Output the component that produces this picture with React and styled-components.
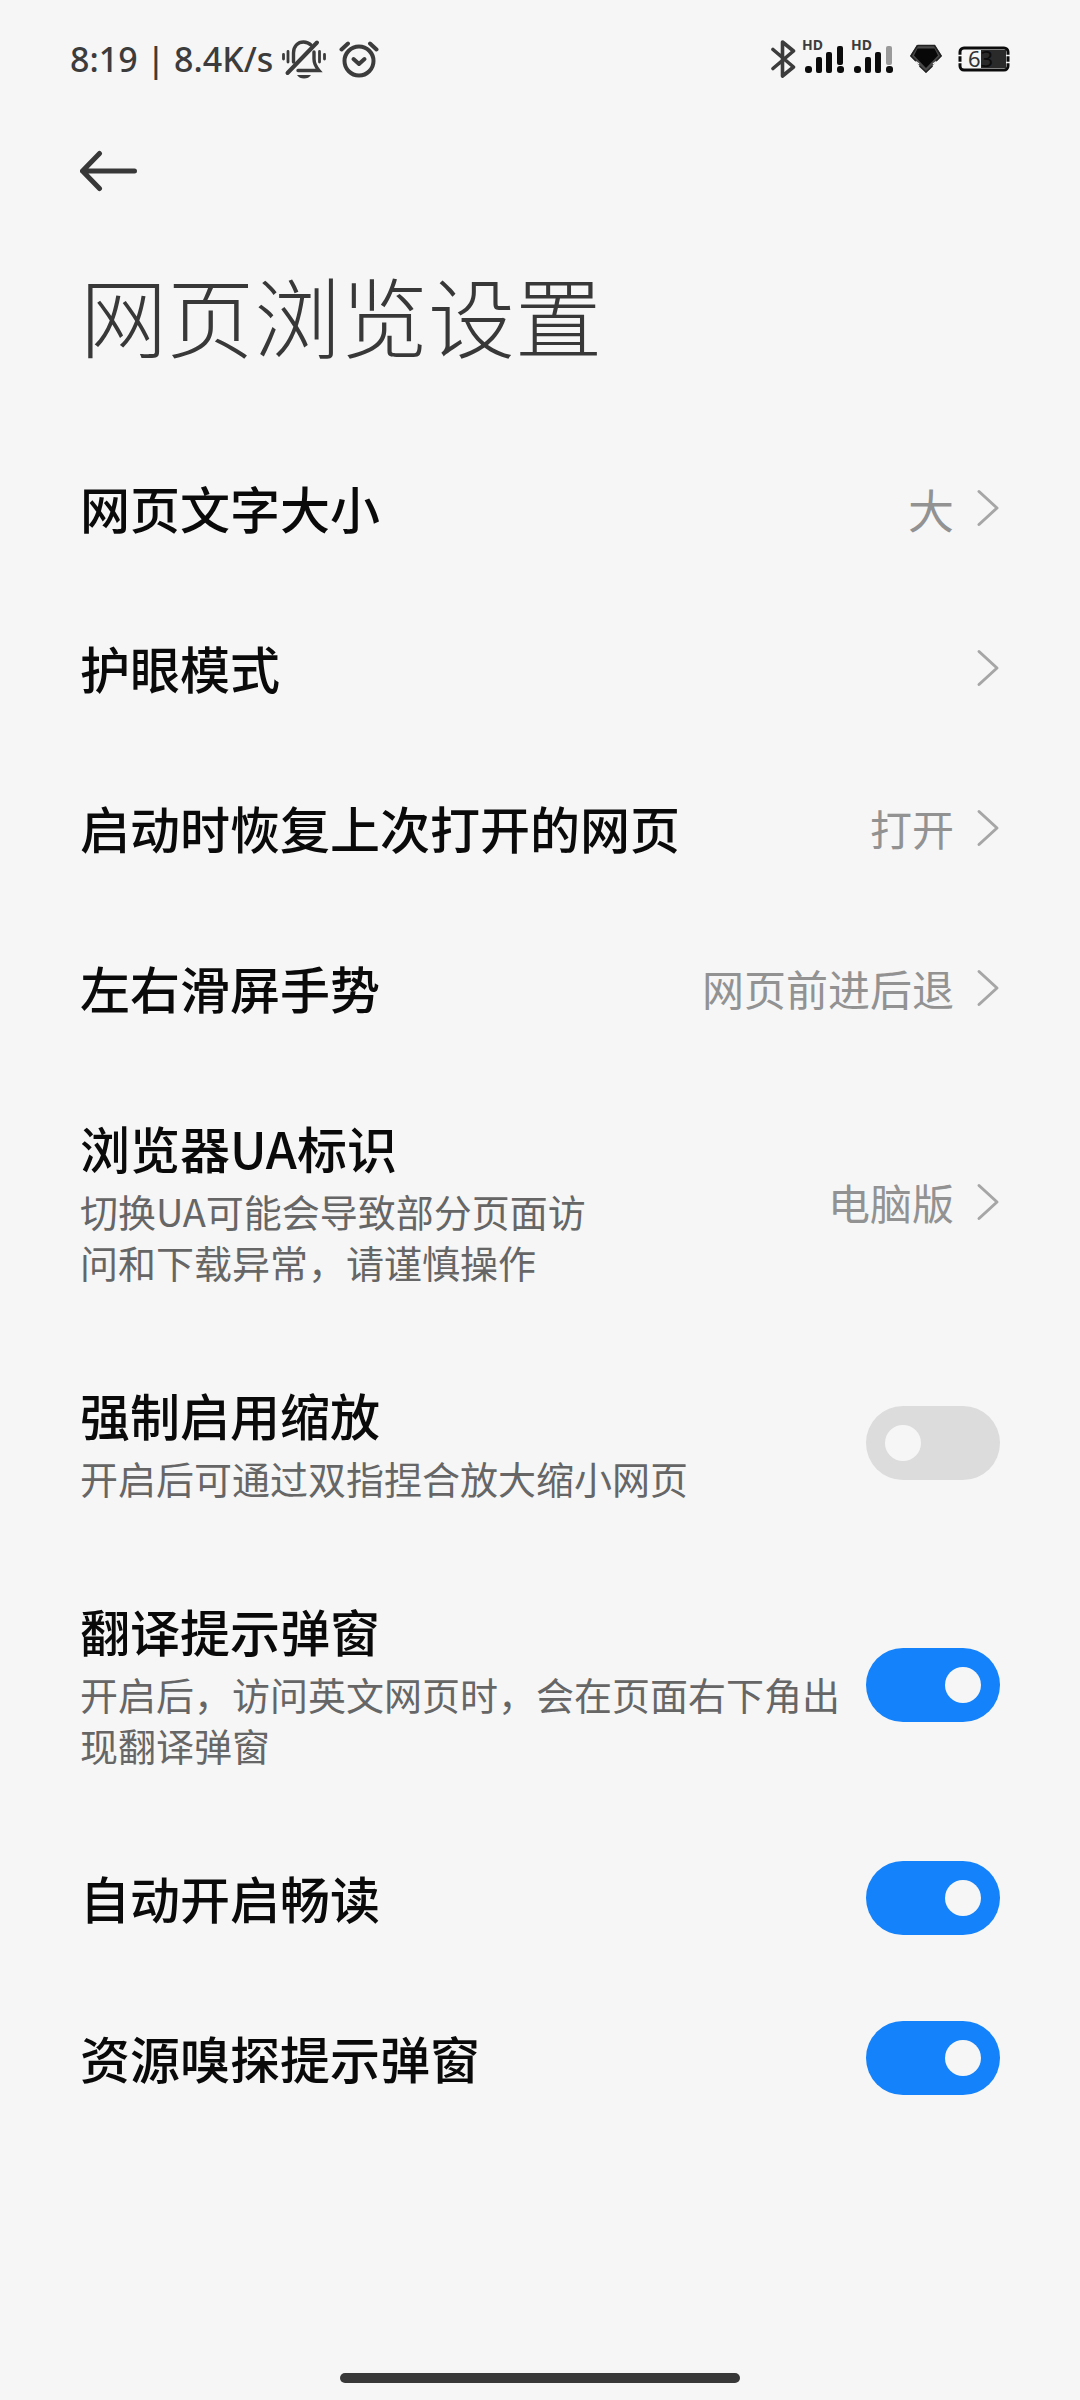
import React, { useState } from "react";
import styled, { createGlobalStyle } from "styled-components";

// Styles
const GlobalStyle = createGlobalStyle`
  * {
    box-sizing: border-box;
  }

  body {
    margin: 0;
    background: #f6f6f6;
    color: #0a0a0a;
    font-family: "Noto Sans CJK SC", sans-serif;
  }

  button {
    border: 0;
    padding: 0;
    background: none;
    color: inherit;
    font: inherit;
    text-align: left;
    cursor: pointer;
  }

  svg {
    display: block;
    flex: none;
  }
`;

const Screen = styled.div`
  display: flex;
  flex-direction: column;
  min-height: 100vh;
`;

const StatusBar = styled.div`
  display: flex;
  align-items: center;
  justify-content: space-between;
  height: 118px;
  padding: 0 70px;
  color: #3c3c3c;
`;

const StatusGroup = styled.div`
  display: flex;
  align-items: center;
  gap: ${({ $gap }) => $gap}px;
`;

const StatusText = styled.span`
  font-family: "Noto Sans", sans-serif;
  font-size: 34px;
  font-weight: 500;
  line-height: 40px;
  white-space: nowrap;
`;

const Header = styled.header`
  padding: 32px 80px 0;
  color: #383838;
`;

const BackButton = styled.button`
  display: block;
`;

const PageTitle = styled.h1`
  margin: 58px 0 0;
  font-size: 87px;
  font-weight: 300;
  line-height: 128px;
`;

const List = styled.main`
  display: flex;
  flex: 1;
  flex-direction: column;
  padding: 50px 80px;
`;

const rowStyles = `
  display: flex;
  align-items: center;
  justify-content: space-between;
  gap: 24px;
  width: 100%;
  padding: 40px 0;
  cursor: pointer;
`;

const LinkRow = styled.button`
  && {
    ${rowStyles}
  }
`;

const SwitchRow = styled.label`
  ${rowStyles}
`;

const RowText = styled.span`
  display: flex;
  flex-direction: column;
  gap: 5px;
  padding: 6px 0 8px;
`;

const RowTitle = styled.span`
  font-size: 50px;
  font-weight: 500;
  line-height: 66px;
`;

const RowNote = styled.span`
  max-width: ${({ $narrow }) => ($narrow ? "520px" : "none")};
  color: #666;
  font-size: 38px;
  line-height: 51px;
`;

const RowValue = styled.span`
  display: flex;
  align-items: center;
  gap: 22px;
  color: #929292;
  font-size: ${({ $large }) => ($large ? 46 : 42)}px;
  line-height: 60px;
  white-space: nowrap;
`;

const Switch = styled.input`
  display: flex;
  flex: none;
  align-items: center;
  justify-content: ${({ checked }) => (checked ? "flex-end" : "flex-start")};
  width: 134px;
  height: 74px;
  margin: 0;
  padding: 0 19px;
  border-radius: 37px;
  appearance: none;
  background: ${({ checked }) => (checked ? "#1482fa" : "#dcdcdc")};
  cursor: pointer;

  &::before {
    content: "";
    width: 36px;
    height: 36px;
    border-radius: 50%;
    background: #f6f6f6;
  }
`;

const HomeBar = styled.div`
  width: 37%;
  height: 10px;
  margin: 0 auto 17px;
  border-radius: 5px;
  background: #383838;
`;

// Icons
const MutedBellIcon = () => (
  <svg width="50" height="40" viewBox="0 0 50 40" fill="none" stroke="currentColor" strokeWidth="3.4" strokeLinecap="round">
    <path d="M12.5 23V14C12.5 7 17 3 22.5 3C25.5 3 28 4 30 6" />
    <path d="M6.5 34L36 3.5" strokeWidth="4" />
    <path d="M33 13V20C33 25 35 28 38 31.5H17" />
    <path d="M16 36H30C28.5 38.5 26 39.5 23 39.5S17.5 38.5 16 36Z" fill="currentColor" stroke="none" />
    <path d="M2.5 15.5V20M7 12.5V23M38.5 12.5V23M43.5 15.5V20" strokeWidth="2.8" />
  </svg>
);

const AlarmIcon = () => (
  <svg width="40" height="38" viewBox="0 0 40 38" fill="none" stroke="currentColor" strokeWidth="4" strokeLinecap="round">
    <circle cx="20" cy="21" r="14.5" />
    <path d="M14.5 19L20 24L25.5 19" strokeLinejoin="round" />
    <path d="M2.5 9.5L9 3.5M31 3.5L37.5 9.5" />
  </svg>
);

const BluetoothIcon = () => (
  <svg width="26" height="40" viewBox="0 0 26 40" fill="none" stroke="currentColor" strokeWidth="3.6" strokeLinejoin="round" strokeLinecap="round">
    <path d="M3 10.5L23.5 28L12.5 37V3L23.5 12L3 29.5" />
  </svg>
);

const SignalIcon = ({ weak }) => (
  <svg width="44" height="56" viewBox="0 -8 44 56" fill="#0c0c0c">
    <text x="1" y="11" fontFamily="Noto Sans" fontSize="14" fontWeight="700" fill="#3c3c3c">HD</text>
    <rect x="4" y="27" width="7" height="7" rx="3" />
    <rect x="15" y="18" width="6" height="16" rx="2" />
    <rect x="25" y="13" width="6" height="21" rx="2" />
    <rect x="36" y="7" width="6" height="19" rx="2" fill={weak ? "#9a9a9a" : "#0c0c0c"} />
    <rect x="36" y="27" width="7" height="7" rx="3" />
  </svg>
);

const GemIcon = () => (
  <svg width="34" height="30" viewBox="0 0 34 30">
    <path d="M8 1H26L33 12L27.5 17.5L17 29L6.5 17.5L1 12Z" fill="#4a4a4a" />
    <path d="M8.5 4.5H25.5L29 11.5L17 24L5 11.5Z" fill="#080808" />
    <path d="M6.5 17.5L10 20M27.5 17.5L24 20" stroke="#f6f6f6" strokeWidth="1.5" />
    <path d="M8.5 1.5H25.5L32 12L27 17M8.5 1.5L2 12L7 17M10.5 22L17 28L23.5 22" fill="none" stroke="#222" strokeWidth="1.5" />
  </svg>
);

const BatteryIcon = () => (
  <svg width="52" height="42" viewBox="0 -8 52 42">
    <rect x="2" y="2" width="48" height="22" rx="4" fill="none" stroke="#0c0c0c" strokeWidth="3" />
    <path d="M0 9.5H4M0 16.5H4M48 9.5H52M48 16.5H52" stroke="#f6f6f6" strokeWidth="1.5" />
    <rect x="23" y="4" width="25" height="18" fill="#2a2a2a" />
    <text x="10" y="21" fontFamily="Noto Sans" fontSize="22" fill="#333">
      6<tspan fill="#0c0c0c">3</tspan>
    </text>
  </svg>
);

const BackIcon = () => (
  <svg width="58" height="42" viewBox="0 0 58 42" fill="none" stroke="currentColor" strokeWidth="5" strokeLinecap="round" strokeLinejoin="round">
    <path d="M19.5 3.5L2.5 21L19.5 38.5M2.5 21H54.5" />
  </svg>
);

const Chevron = () => (
  <svg width="24" height="38" viewBox="0 0 24 38" fill="none" stroke="#a6a6a6" strokeWidth="3" strokeLinecap="round" strokeLinejoin="round">
    <path d="M3 2.5L21 19L3 35.5" />
  </svg>
);

const settings = [
  { id: "fontSize", title: "网页文字大小", value: "大", large: true },
  { id: "eyeCare", title: "护眼模式", value: "" },
  { id: "restore", title: "启动时恢复上次打开的网页", value: "打开" },
  { id: "gesture", title: "左右滑屏手势", value: "网页前进后退" },
  { id: "userAgent", title: "浏览器UA标识", note: "切换UA可能会导致部分页面访问和下载异常，请谨慎操作", value: "电脑版" },
  { id: "zoom", title: "强制启用缩放", note: "开启后可通过双指捏合放大缩小网页", toggle: true },
  { id: "translate", title: "翻译提示弹窗", note: "开启后，访问英文网页时，会在页面右下角出现翻译弹窗", toggle: true },
  { id: "reader", title: "自动开启畅读", toggle: true },
  { id: "sniffer", title: "资源嗅探提示弹窗", toggle: true },
];

const SettingText = ({ title, note, narrow }) => (
  <RowText>
    <RowTitle>{title}</RowTitle>
    {note && <RowNote $narrow={narrow}>{note}</RowNote>}
  </RowText>
);

const App = () => {
  const [enabled, setEnabled] = useState({
    zoom: false,
    translate: true,
    reader: true,
    sniffer: true,
  });

  const toggle = (id) => setEnabled({ ...enabled, [id]: !enabled[id] });

  return (
    <Screen>
      <GlobalStyle />
      <StatusBar>
        <StatusGroup $gap={8}>
          <StatusText>8:19 | 8.4K/s</StatusText>
          <MutedBellIcon />
          <AlarmIcon />
        </StatusGroup>
        <StatusGroup $gap={15}>
          <StatusGroup $gap={5}>
            <BluetoothIcon />
            <SignalIcon />
            <SignalIcon weak />
          </StatusGroup>
          <GemIcon />
          <BatteryIcon />
        </StatusGroup>
      </StatusBar>

      <Header>
        <BackButton aria-label="返回">
          <BackIcon />
        </BackButton>
        <PageTitle>网页浏览设置</PageTitle>
      </Header>

      <List>
        {settings.map(item =>
          item.toggle ? (
            <SwitchRow key={item.id} htmlFor={item.id}>
              <SettingText title={item.title} note={item.note} />
              <Switch
                id={item.id}
                type="checkbox"
                checked={enabled[item.id]}
                onChange={() => toggle(item.id)}
              />
            </SwitchRow>
          ) : (
            <LinkRow key={item.id} type="button">
              <SettingText title={item.title} note={item.note} narrow />
              <RowValue $large={item.large}>
                {item.value}
                <Chevron />
              </RowValue>
            </LinkRow>
          )
        )}
      </List>

      <HomeBar />
    </Screen>
  );
};

export default App;
